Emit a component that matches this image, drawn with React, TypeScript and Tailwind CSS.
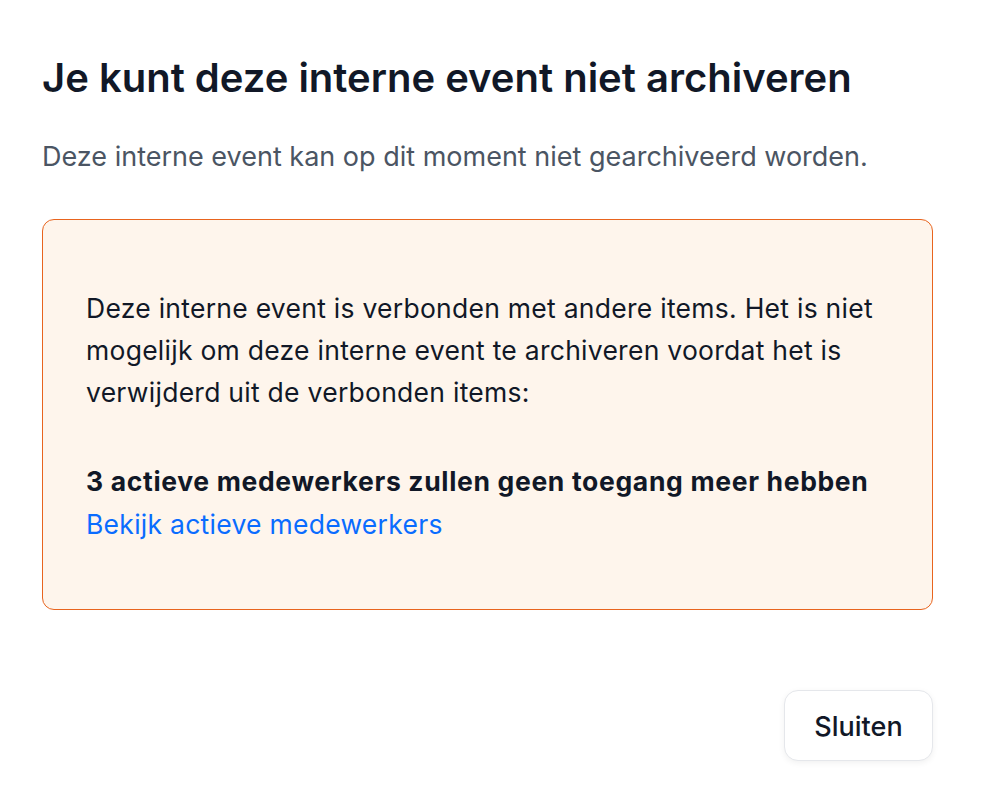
export default function App() {
  return (
    <div className="min-h-screen bg-white font-['Inter',sans-serif] text-[#111827]">
      <div className="flex flex-col pl-[42px] pr-[53px] pt-[56px]">
        <h1 className="text-[40px] font-semibold leading-[44px]">
          Je kunt deze interne event niet archiveren
        </h1>
        <p className="mt-[41px] text-[27px] leading-[32px] text-[#4b5563]">
          Deze interne event kan op dit moment niet gearchiveerd worden.
        </p>

        <div className="mt-[46px] rounded-[12px] border border-[#e8641e] bg-[#fef5ec] pl-[43px] pr-[50px] pt-[67px] pb-[63px]">
          <p className="text-[26.5px] leading-[42px] tracking-[0.01em]">
            Deze interne event is verbonden met andere items. Het is niet mogelijk om deze interne event te
            archiveren voordat het is verwijderd uit de verbonden items:
          </p>
          <div className="mt-[47px] flex flex-col">
            <span className="text-[26.5px] font-bold leading-[43px] tracking-[0.025em]">
              3 actieve medewerkers zullen geen toegang meer hebben
            </span>
            <a href="#" className="text-[26.5px] leading-[43px] tracking-[0.01em] text-[#0a6cff]">
              Bekijk actieve medewerkers
            </a>
          </div>
        </div>

        <div className="mt-[80px] flex justify-end">
          <button className="h-[71px] w-[149px] rounded-[14px] border border-[#e5e7eb] bg-white pt-[3px] text-[27px] font-medium shadow-[0_2px_6px_rgba(0,0,0,0.06)]">
            Sluiten
          </button>
        </div>
      </div>
    </div>
  )
}
